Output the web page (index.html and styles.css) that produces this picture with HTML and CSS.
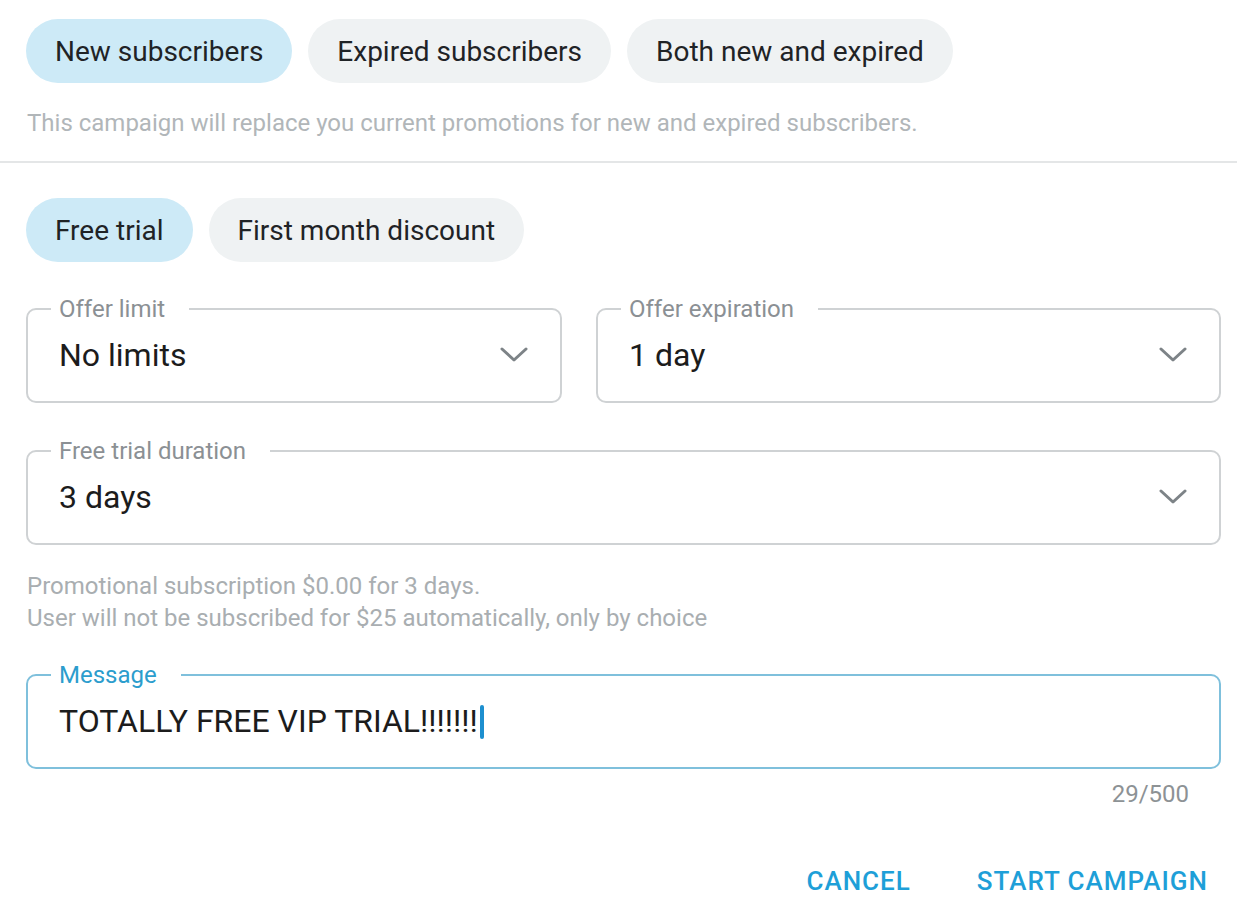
FILE: index.html
```html
<!DOCTYPE html>
<html lang="en">
<head>
    <meta charset="UTF-8">
    <meta name="viewport" content="width=device-width, initial-scale=1.0">
    <title>New Campaign</title>
    <link rel="stylesheet" href="styles.css">
</head>
<body>
    <div class="section audience">
        <div class="chips">
            <button class="chip active">New subscribers</button>
            <button class="chip">Expired subscribers</button>
            <button class="chip">Both new and expired</button>
        </div>
        <p class="hint">This campaign will replace you current promotions for new and expired subscribers.</p>
    </div>
    <hr class="divider">
    <div class="section offer">
        <div class="chips">
            <button class="chip active">Free trial</button>
            <button class="chip">First month discount</button>
        </div>

        <div class="field-row">
            <fieldset class="field">
                <legend>Offer limit</legend>
                <div class="field-value">
                    <span>No limits</span>
                    <svg class="chevron" viewBox="0 0 28 16" width="28" height="16"><path d="M2 2 L14 13 L26 2" /></svg>
                </div>
            </fieldset>
            <fieldset class="field">
                <legend>Offer expiration</legend>
                <div class="field-value">
                    <span>1 day</span>
                    <svg class="chevron" viewBox="0 0 28 16" width="28" height="16"><path d="M2 2 L14 13 L26 2" /></svg>
                </div>
            </fieldset>
        </div>

        <fieldset class="field">
            <legend>Free trial duration</legend>
            <div class="field-value">
                <span>3 days</span>
                <svg class="chevron" viewBox="0 0 28 16" width="28" height="16"><path d="M2 2 L14 13 L26 2" /></svg>
            </div>
        </fieldset>

        <p class="note">Promotional subscription $0.00 for 3 days.<br>User will not be subscribed for $25 automatically, only by choice</p>

        <fieldset class="field focused">
            <legend>Message</legend>
            <div class="field-value">
                <span>TOTALLY FREE VIP TRIAL!!!!!!!<i class="caret"></i></span>
            </div>
        </fieldset>
        <div class="counter">29/500</div>

        <div class="actions">
            <button class="text-btn">Cancel</button>
            <button class="text-btn">Start campaign</button>
        </div>
    </div>
</body>
</html>
```

FILE: styles.css
```css
body {
    margin: 0;
    font-family: Roboto, "Noto Sans", Arial, sans-serif;
    background-color: #fff;
    color: #1f2326;
}
.section {
    padding: 0 16px 0 26px;
}
.audience {
    padding-top: 19px;
}
.chips {
    display: flex;
    gap: 16px;
}
.chip {
    font-family: inherit;
    font-size: 28px;
    color: #1f2326;
    height: 64px;
    padding: 0 29px;
    border: none;
    border-radius: 32px;
    background-color: #eff2f3;
}
.chip.active {
    background-color: #cdeaf7;
}
.hint {
    margin: 24px 0 0 1px;
    font-size: 24px;
    line-height: 32px;
    color: #b1b6b9;
}
.divider {
    margin: 22px 0 35px;
    border: none;
    border-top: 2px solid #e4e6e7;
}
.field-row {
    display: grid;
    grid-template-columns: 536fr 625fr;
    gap: 34px;
    margin-top: 33px;
}
.field {
    margin: 0;
    padding: 0 32px 14px 31px;
    border: 2px solid #cfd2d4;
    border-radius: 10px;
    min-width: 0;
}
.field legend {
    margin-left: -8px;
    padding: 0 24px 0 8px;
    font-size: 24px;
    line-height: 28px;
    color: #8b9094;
}
.field-value {
    display: flex;
    align-items: center;
    justify-content: space-between;
    height: 64px;
    font-size: 32px;
    color: #1c1c1c;
}
.chevron {
    fill: none;
    stroke: #7d8387;
    stroke-width: 3;
    stroke-linecap: round;
    stroke-linejoin: round;
}
.offer > .field {
    margin-top: 34px;
}
.note {
    margin: 25px 0 0 1px;
    font-size: 24px;
    line-height: 32px;
    color: #a9aeb1;
}
.offer > .field.focused {
    margin-top: 27px;
    border-color: #7fc0dc;
}
.field.focused legend {
    color: #2c9dcd;
}
.caret {
    display: inline-block;
    width: 4px;
    height: 34px;
    margin-left: 2px;
    vertical-align: -7px;
    background-color: #1d8fcf;
    border-radius: 2px;
}
.counter {
    margin-top: 9px;
    padding-right: 32px;
    text-align: right;
    font-size: 24px;
    line-height: 32px;
    color: #8d9295;
}
.actions {
    display: flex;
    justify-content: flex-end;
    gap: 40px;
    margin-top: 55px;
    padding-right: 0;
}
.text-btn {
    font-family: inherit;
    font-size: 26px;
    font-weight: 500;
    letter-spacing: 1px;
    text-transform: uppercase;
    color: #1e9fd8;
    background: none;
    border: none;
    padding: 0 13px;
    line-height: 32px;
}
```
